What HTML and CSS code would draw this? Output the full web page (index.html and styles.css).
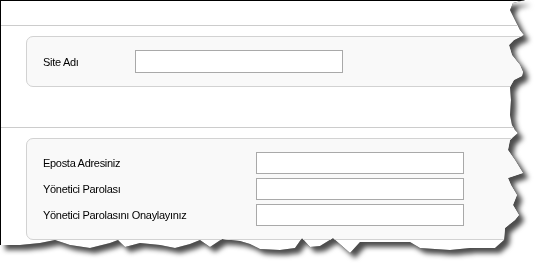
FILE: index.html
```html
<!DOCTYPE html>
<html lang="tr">
<head>
<meta charset="utf-8">
<title>Kurulum</title>
<link rel="stylesheet" href="styles.css">
</head>
<body>
<div class="frame">
  <div class="sheet">
    <div class="top-band"></div>
    <fieldset class="group">
      <div class="row row-site">
        <label class="label label-site" for="site">Site Adı</label>
        <input class="field" id="site" type="text">
      </div>
    </fieldset>
    <div class="rule"></div>
    <fieldset class="group">
      <div class="row">
        <label class="label label-wide" for="mail">Eposta Adresiniz</label>
        <input class="field field-sm" id="mail" type="text">
      </div>
      <div class="row">
        <label class="label label-wide" for="pw">Yönetici Parolası</label>
        <input class="field field-sm" id="pw" type="password">
      </div>
      <div class="row">
        <label class="label label-wide" for="pw2">Yönetici Parolasını Onaylayınız</label>
        <input class="field field-sm" id="pw2" type="password">
      </div>
    </fieldset>
  </div>
</div>
</body>
</html>
```
FILE: styles.css
```css
html, body {
  margin: 0;
  padding: 0;
  background: #ffffff;
}

body {
  width: 539px;
  height: 264px;
  overflow: hidden;
  font-family: "Liberation Sans", Arial, sans-serif;
  font-size: 11px;
  color: #000;
}

.frame {
  width: 539px;
  height: 264px;
  filter: drop-shadow(0 0 0.6px #000) drop-shadow(5px 5px 2.5px rgba(0, 0, 0, 0.7));
}

.sheet {
  box-sizing: border-box;
  width: 539px;
  height: 264px;
  background: #ffffff;
  border-top: 1px solid #000;
  border-left: 1px solid #000;
  display: flex;
  flex-direction: column;
  clip-path: polygon(
    0 0, 525px 0, 513px 3px, 510px 10px, 515px 20px, 520px 30px, 524px 35px,
    514px 40px, 509px 45px, 512px 55px, 520px 65px, 523px 72px, 522px 76px,
    514px 80px, 510px 87px, 511px 100px, 510px 115px, 512px 125px, 515px 130px,
    518px 133px, 510px 140px, 508px 150px, 515px 160px, 523px 173px, 508px 178px,
    511px 185px, 517px 195px, 513px 205px, 519px 215px, 515px 220px, 505px 228px,
    504px 240px, 495px 248px, 470px 248px, 450px 250px, 420px 248px, 410px 242px,
    360px 242px, 350px 253px, 333px 238px, 320px 246px, 310px 247px, 302px 238px,
    295px 248px, 280px 250px, 260px 249px, 250px 244px, 240px 241px, 222px 239px,
    210px 247px, 200px 240px, 190px 244px, 175px 248px, 160px 245px, 140px 243px,
    125px 247px, 118px 240px, 110px 243px, 90px 248px, 70px 245px, 55px 240px,
    40px 243px, 20px 245px, 0 245px
  );
}

.top-band {
  height: 24px;
  border-bottom: 1px solid #cccccc;
  flex: none;
}

.group {
  margin: 10px 0 0 25px;
  padding: 13px 0 13px 16px;
  border: 1px solid #d2d2d2;
  border-radius: 7px;
  background: #f9f9f9;
  min-width: 0;
  display: flex;
  flex-direction: column;
  gap: 4px;
  flex: none;
}

.rule {
  margin-top: 40px;
  border-top: 1px solid #cccccc;
  flex: none;
}

.row {
  display: flex;
  align-items: center;
}

.label {
  flex: none;
  letter-spacing: -0.3px;
}

.label-site {
  width: 92px;
}

.label-wide {
  width: 213px;
}

.field {
  box-sizing: border-box;
  width: 208px;
  height: 23px;
  margin: 0;
  padding: 0 3px;
  border: 1px solid #a9a9a9;
  background: #ffffff;
  font: inherit;
}

.field-sm {
  height: 22px;
}
```
